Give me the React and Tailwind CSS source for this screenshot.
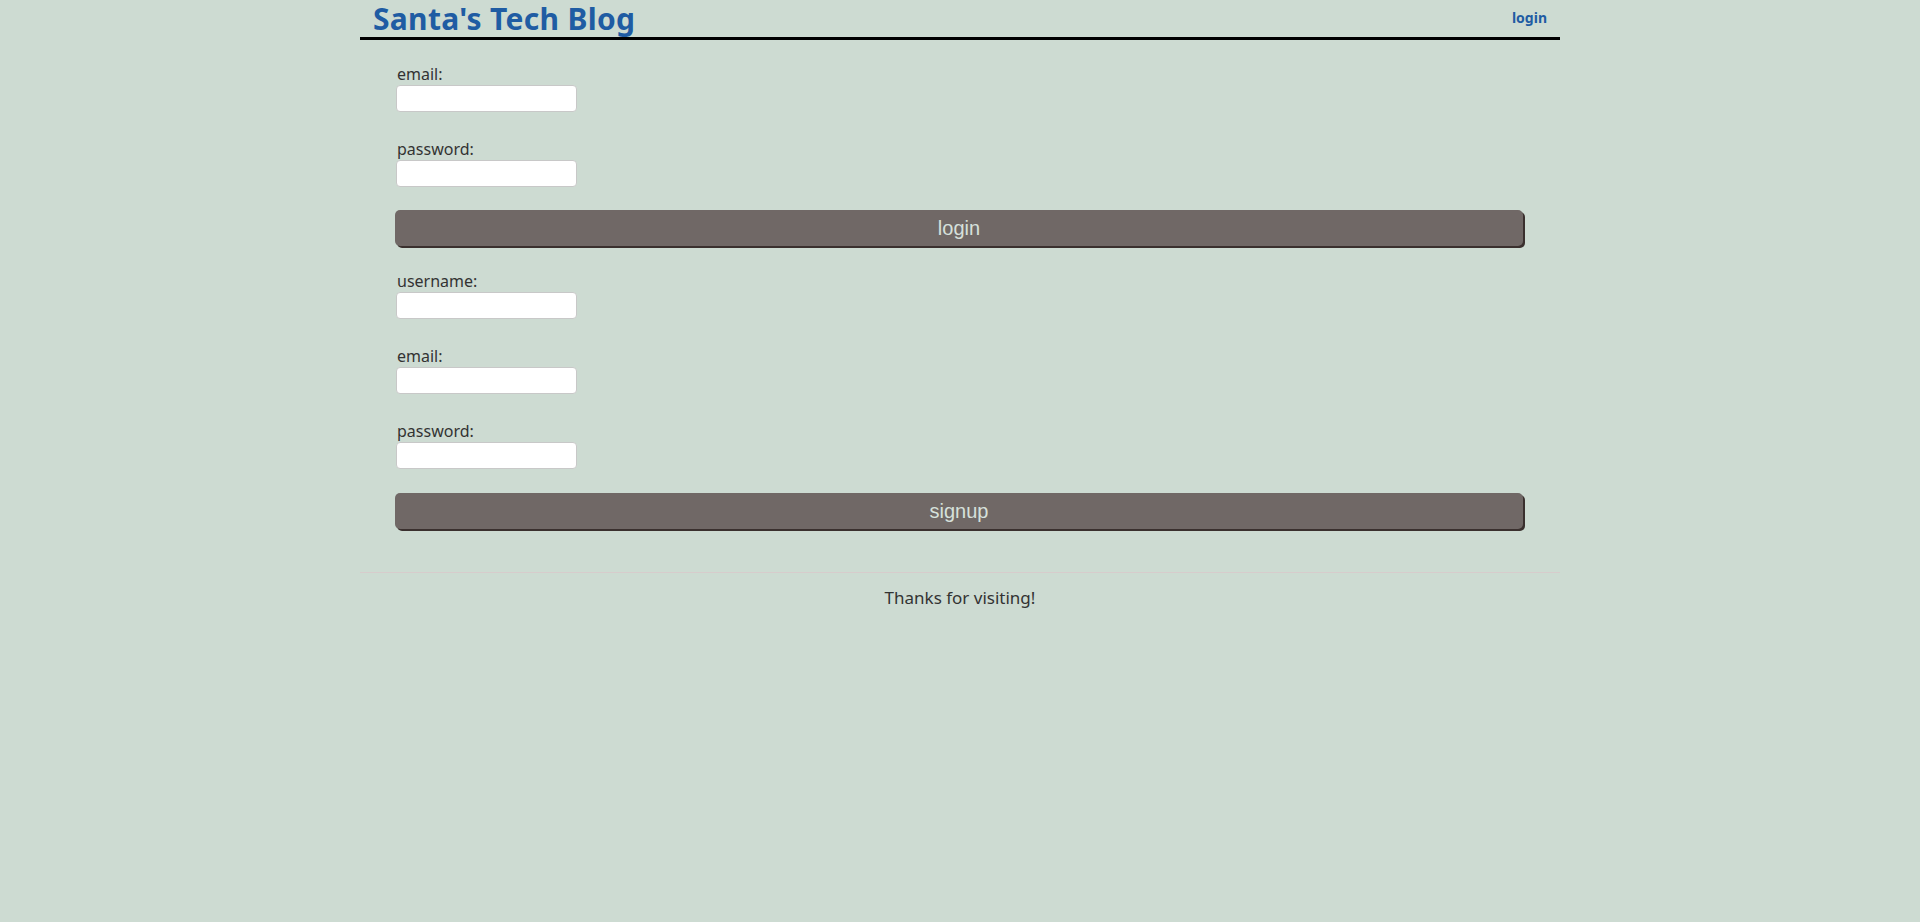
import React from "react";

function Field({ label, className = "" }) {
  return (
    <div className={"flex flex-col " + className}>
      <label className="text-[16px] leading-[21px] text-[#333333] pl-[2px]">{label}</label>
      <input className="ml-[1px] w-[181px] h-[27px] bg-white border border-[#c8c8c8] rounded-[4px] outline-none" />
    </div>
  );
}

function Btn({ children, className = "" }) {
  return (
    <button className={"w-full h-[36px] bg-[#706866] rounded-[5px] shadow-[2px_2px_0_#3a302e] text-[20px] text-[#d6e0db] " + className} style={{ fontFamily: '"Liberation Sans", Arial, sans-serif' }}>
      {children}
    </button>
  );
}

export default function App() {
  return (
    <div className="min-h-[922px] bg-[#cddbd2] text-[#333333]" style={{ fontFamily: '"Noto Sans", "Open Sans", sans-serif' }}>
      <div className="w-[1200px] mx-auto">
        <header className="flex justify-between items-end h-[40px] border-b-[3px] border-black pl-[13px] pr-[13px]">
          <h1 className="text-[30px] leading-[37px] font-bold text-[#1f5ca3] tracking-[0.3px]">Santa's Tech Blog</h1>
          <a className="text-[14px] font-bold text-[#1f5ca3] mb-[9px]">login</a>
        </header>
        <main className="pl-[35px] pr-[37px] pt-[24px]">
          <form className="flex flex-col">
            <Field label="email:" />
            <Field label="password:" className="mt-[27px]" />
            <Btn className="mt-[23px]">login</Btn>
          </form>
          <form className="flex flex-col mt-[25px]">
            <Field label="username:" />
            <Field label="email:" className="mt-[27px]" />
            <Field label="password:" className="mt-[27px]" />
            <Btn className="mt-[24px]">signup</Btn>
          </form>
        </main>
        <footer className="mt-[43px] border-t border-[#d7cccc] pt-[12px] text-center">
          <p className="text-[17px] leading-[26px] text-[#333333]">Thanks for visiting!</p>
        </footer>
      </div>
    </div>
  );
}
